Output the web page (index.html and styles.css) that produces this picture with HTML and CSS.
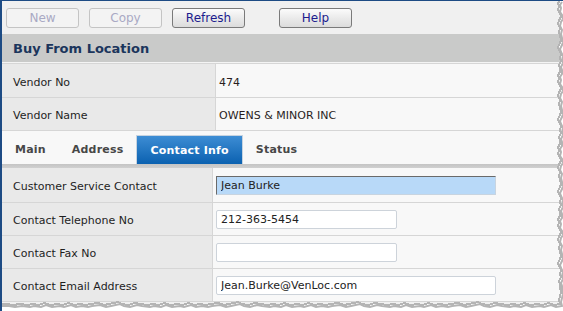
FILE: index.html
```html
<!DOCTYPE html>
<html lang="en">
<head>
    <meta charset="UTF-8">
    <title>Buy From Location</title>
    <link rel="stylesheet" href="styles.css">
</head>
<body>
    <div class="frame">
        <div class="toolbar">
            <button class="btn" disabled>New</button>
            <button class="btn" disabled>Copy</button>
            <button class="btn">Refresh</button>
            <button class="btn btn-help">Help</button>
        </div>

        <div class="section-title">Buy From Location</div>

        <div class="rows rows-top">
            <div class="row">
                <div class="label">Vendor No</div>
                <div class="value">474</div>
            </div>
            <div class="row">
                <div class="label">Vendor Name</div>
                <div class="value">OWENS &amp; MINOR INC</div>
            </div>
        </div>

        <div class="tabs">
            <span class="tab">Main</span>
            <span class="tab">Address</span>
            <span class="tab active">Contact Info</span>
            <span class="tab">Status</span>
        </div>
        <div class="tab-rule"></div>

        <div class="rows rows-form">
            <div class="row row-first">
                <div class="label">Customer Service Contact</div>
                <div class="value"><input type="text" class="field field-wide focused" value="Jean Burke"></div>
            </div>
            <div class="row">
                <div class="label">Contact Telephone No</div>
                <div class="value"><input type="text" class="field" value="212-363-5454"></div>
            </div>
            <div class="row">
                <div class="label">Contact Fax No</div>
                <div class="value"><input type="text" class="field" value=""></div>
            </div>
            <div class="row">
                <div class="label">Contact Email Address</div>
                <div class="value"><input type="text" class="field field-wide" value="Jean.Burke@VenLoc.com"></div>
            </div>
        </div>

        <!-- torn paper edge over the right and bottom -->
        <svg class="tear" width="563" height="311" viewBox="0 0 563 311">
            <path fill="#fff" fill-rule="evenodd" shape-rendering="crispEdges"
                d="M0 0H563V311H0Z M0 0H560
                   l-2 3 1 3 -1 4 2 3 1 4 -2 3 -1 4 2 4 -1 4 1 4
                   l1 4 -1 3 -2 4 1 3 2 4 -1 4 1 3 -2 4 1 3 0 4
                   l-2 3 1 3 -1 4 2 3 1 4 -2 3 -1 4 2 4 -1 4 1 4
                   l1 4 -1 3 -2 4 1 3 2 4 -1 4 1 3 -2 4 1 3 0 4
                   l-2 3 1 3 -1 4 2 3 1 4 -2 3 -1 4 2 4 -1 4 1 4
                   l1 4 -1 3 -2 4 1 3 2 4 -1 4 1 3 -2 4 1 3 0 4
                   l-2 3 1 3 -1 4 2 3 1 4 -2 3 -1 4 2 4 -1 4 1 4
                   l1 4 -1 3 -2 4 1 3 2 4 -1 4 1 3 -2 4 1 3 0 4
                   l1 4 -1 4 -1 4 1 4
                   l-6 1 -5 -2 -7 2 -4 -1 -8 1 -6 -2 -5 2 -7 -1 -4 1 -8 -1
                   l-5 -1 -7 2 -6 -1 -4 -2 -9 2 -5 1 -6 -2 -8 1 -4 1 -6 -1
                   l-6 1 -5 -2 -7 2 -4 -1 -8 1 -6 -2 -5 2 -7 -1 -4 1 -8 -1
                   l-5 -1 -7 2 -6 -1 -4 -2 -9 2 -5 1 -6 -2 -8 1 -4 1 -6 -1
                   l-6 1 -5 -2 -7 2 -4 -1 -8 1 -6 -2 -5 2 -7 -1 -4 1 -8 -1
                   l-5 -1 -7 2 -6 -1 -4 -2 -9 2 -5 1 -6 -2 -8 1 -4 1 -6 -1
                   l-6 1 -5 -2 -7 2 -4 -1 -8 1 -6 -2 -5 2 -7 -1 -4 1 -8 -1
                   l-5 -1 -7 2 -6 -1 -4 -2 -9 2 -5 1 -6 -2 -8 1 -4 1 -6 -1
                   l-6 1 -5 -2 -7 2 -4 -1 -8 1 -6 -2 -5 2 -7 -1 -4 1 -8 -1
                   l-7 1 -6 -1 -7 0Z"/>
            <path id="edge" fill="none" stroke="#b4b4b4" stroke-width="2" transform="translate(2 2)"
                d="M560 0
                   l-2 3 1 3 -1 4 2 3 1 4 -2 3 -1 4 2 4 -1 4 1 4
                   l1 4 -1 3 -2 4 1 3 2 4 -1 4 1 3 -2 4 1 3 0 4
                   l-2 3 1 3 -1 4 2 3 1 4 -2 3 -1 4 2 4 -1 4 1 4
                   l1 4 -1 3 -2 4 1 3 2 4 -1 4 1 3 -2 4 1 3 0 4
                   l-2 3 1 3 -1 4 2 3 1 4 -2 3 -1 4 2 4 -1 4 1 4
                   l1 4 -1 3 -2 4 1 3 2 4 -1 4 1 3 -2 4 1 3 0 4
                   l-2 3 1 3 -1 4 2 3 1 4 -2 3 -1 4 2 4 -1 4 1 4
                   l1 4 -1 3 -2 4 1 3 2 4 -1 4 1 3 -2 4 1 3 0 4
                   l1 4 -1 4 -1 4 1 4
                   l-6 1 -5 -2 -7 2 -4 -1 -8 1 -6 -2 -5 2 -7 -1 -4 1 -8 -1
                   l-5 -1 -7 2 -6 -1 -4 -2 -9 2 -5 1 -6 -2 -8 1 -4 1 -6 -1
                   l-6 1 -5 -2 -7 2 -4 -1 -8 1 -6 -2 -5 2 -7 -1 -4 1 -8 -1
                   l-5 -1 -7 2 -6 -1 -4 -2 -9 2 -5 1 -6 -2 -8 1 -4 1 -6 -1
                   l-6 1 -5 -2 -7 2 -4 -1 -8 1 -6 -2 -5 2 -7 -1 -4 1 -8 -1
                   l-5 -1 -7 2 -6 -1 -4 -2 -9 2 -5 1 -6 -2 -8 1 -4 1 -6 -1
                   l-6 1 -5 -2 -7 2 -4 -1 -8 1 -6 -2 -5 2 -7 -1 -4 1 -8 -1
                   l-5 -1 -7 2 -6 -1 -4 -2 -9 2 -5 1 -6 -2 -8 1 -4 1 -6 -1
                   l-6 1 -5 -2 -7 2 -4 -1 -8 1 -6 -2 -5 2 -7 -1 -4 1 -8 -1
                   l-7 1 -6 -1 -7 0"/>
            <use href="#edge" transform="translate(-2 -2)" stroke="#000" stroke-width="1" shape-rendering="crispEdges"/>
        </svg>
    </div>
</body>
</html>
```

FILE: styles.css
```css
body {
    margin: 0;
    background-color: #fff;
    font-family: "DejaVu Sans", Verdana, sans-serif;
    font-size: 11px;
    color: #222;
}

.frame {
    position: relative;
    width: 563px;
    height: 311px;
    overflow: hidden;
    box-sizing: border-box;
    border-top: 1px solid #1d4b84;
    border-left: 2px solid #1d4b84;
    background-color: #f0f0f0;
}

/* toolbar */
.toolbar {
    display: flex;
    gap: 10px;
    height: 33px;
    box-sizing: border-box;
    padding: 7px 0 0 4px;
}

.btn {
    width: 73px;
    height: 20px;
    padding: 0;
    font-family: "DejaVu Sans", Verdana, sans-serif;
    font-size: 12px;
    color: #1c1c8e;
    border: 1px solid #7a7a7a;
    border-radius: 3px;
    background: linear-gradient(#fbfbfb, #e9e9e9 55%, #dcdcdc);
}

.btn:disabled {
    color: #a9a9c4;
    border-color: #c4c4c4;
    background: #f3f3f3;
}

.btn-help {
    margin-left: 24px;
}

.section-title {
    height: 29px;
    box-sizing: border-box;
    padding: 2px 0 0 11px;
    line-height: 26px;
    margin-right: 3px;
    background-color: #c9cac9;
    border-bottom: 1px solid #f4f4f4;
    font-size: 13px;
    font-weight: bold;
    color: #1b355c;
}

/* label / value rows */
.row {
    display: grid;
    grid-template-columns: 214px 1fr;
    border-bottom: 1px solid #d6d6d6;
}

.rows-top {
    border-top: 1px solid #d6d6d6;
}

.rows-top .row {
    height: 33px;
}

.rows-top .row + .row {
    height: 32px;
}

.rows-form .row {
    grid-template-columns: 211px 1fr;
    height: 32px;
}

.rows-form .row-first {
    height: 34px;
}

.label {
    display: flex;
    align-items: center;
    padding: 3px 0 0 11px;
    background-color: #e9e9e9;
    border-right: 1px solid #d6d6d6;
    color: #1e1e1e;
}

.value {
    display: flex;
    align-items: center;
    padding-left: 3px;
    background-color: #f8f8f8;
    color: #2a1e1e;
}

.rows-top .value {
    padding-top: 3px;
}

/* tabs */
.tabs {
    display: flex;
    align-items: flex-end;
    height: 33px;
    box-sizing: border-box;
    background-color: #f8f8f8;
}

.tab {
    display: flex;
    align-items: center;
    height: 29px;
    padding: 0 13px;
    font-weight: bold;
    letter-spacing: 0.2px;
    color: #474747;
}

.tab.active {
    box-sizing: border-box;
    border: 1px solid #c6d3e0;
    border-bottom: none;
    background: linear-gradient(#3d8dd4, #0b61b0);
    color: #fff;
}

.tab-rule {
    height: 4px;
    background: linear-gradient(#c4c4c4, #d0d0d0);
}

/* inputs */
.field {
    width: 181px;
    height: 19px;
    box-sizing: border-box;
    padding: 0 0 0 4px;
    border: 1px solid #cdd3da;
    border-radius: 2px;
    background-color: #fff;
    font-family: "DejaVu Sans", Verdana, sans-serif;
    font-size: 11px;
    color: #222;
}

.field-wide {
    width: 280px;
}

.field.focused {
    border-radius: 0;
    border-color: #6a6a6a #c8d4e0 #c8d4e0 #6a6a6a;
    background-color: #b8d9f8;
}

.tear {
    position: absolute;
    left: -2px;
    top: -1px;
}
```
